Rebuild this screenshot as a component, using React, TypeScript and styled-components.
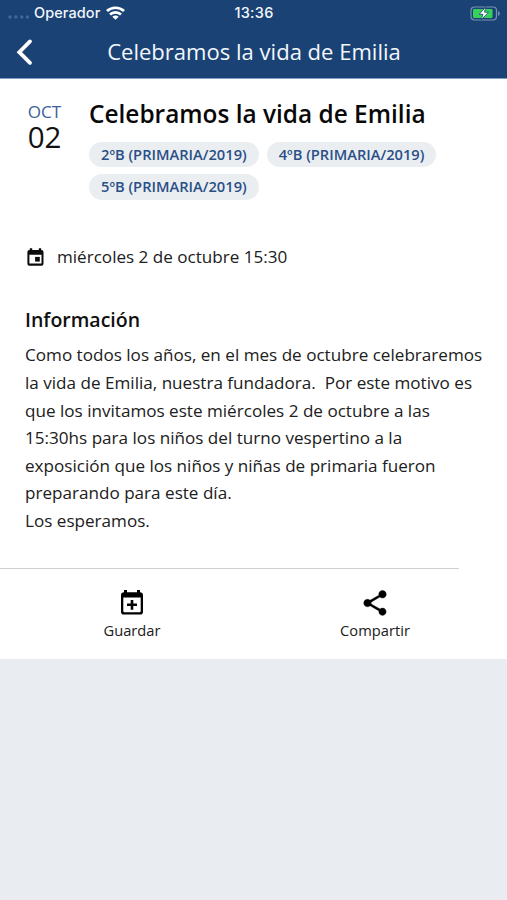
import React from "react";
import styled, { createGlobalStyle } from "styled-components";

const GlobalStyle = createGlobalStyle`
  *, *::before, *::after { box-sizing: border-box; }
  body { margin: 0; background: #e9edf1; font-family: "Open Sans", sans-serif; color: #202020; }
`;

const Screen = styled.main`
  width: 507px;
  min-height: 900px;
  background: #e9edf1;
`;

const Header = styled.header`
  height: 79px;
  background: #1a4274;
  border-bottom: 1px solid #7f9cc4;
  color: #f3f7fc;
`;

const StatusBar = styled.div`
  display: grid;
  grid-template-columns: 1fr auto 1fr;
  align-items: center;
  height: 26px;
  padding: 0 7px 0 8px;
  font: 500 14.5px/26px "Inter", sans-serif;
`;

const Carrier = styled.div`
  display: flex;
  align-items: center;
  letter-spacing: 0.08px;
`;

const SignalDots = styled.svg`
  margin: 8px 4px 0 0;
`;

const Wifi = styled.svg`
  margin-left: 6px;
`;

const Clock = styled.time`
  font-weight: 500;
  letter-spacing: 0.3px;
`;

const Battery = styled.svg`
  justify-self: end;
`;

const NavBar = styled.nav`
  display: grid;
  grid-template-columns: 50px 1fr 50px;
  align-items: center;
  height: 52px;
`;

const BackButton = styled.button`
  display: flex;
  padding: 0 0 0 15px;
  border: 0;
  background: none;
  color: #fff;
`;

const NavTitle = styled.h1`
  margin: 0 0 2px;
  padding-left: 1px;
  font-size: 22.05px;
  font-weight: 400;
  line-height: 30px;
  text-align: center;
`;

const Card = styled.article`
  height: 580px;
  padding-top: 20px;
  background: #fff;
`;

const Summary = styled.section`
  display: grid;
  grid-template-columns: 89px 1fr;
  height: 121px;
`;

const DateBadge = styled.div`
  display: flex;
  flex-direction: column;
  align-items: center;
  padding-top: 2px;
`;

const Month = styled.span`
  color: #3b609a;
  font-size: 17.1px;
  line-height: 22px;
`;

const Day = styled.span`
  color: #111;
  font-size: 29.5px;
  line-height: 27px;
`;

const EventTitle = styled.h2`
  margin: 0;
  color: #080808;
  font-size: 24.42px;
  font-weight: 600;
  line-height: 30px;
`;

const Chips = styled.div`
  display: flex;
  flex-wrap: wrap;
  gap: 7px 8px;
  padding-top: 12.5px;
`;

const Chip = styled.span`
  height: 25.5px;
  padding: 0 12px;
  border-radius: 13px;
  background: #eaeef1;
  color: #2b4f87;
  font-size: 14.68px;
  font-weight: 600;
  line-height: 25px;
`;

const Schedule = styled.div`
  display: flex;
  align-items: center;
  gap: 13px;
  height: 34px;
  margin-top: 20px;
  padding-left: 27px;
  font-size: 17.08px;
  line-height: 24px;
`;

const Information = styled.section`
  height: 242px;
  padding: 33px 20px 0 25px;
`;

const SectionTitle = styled.h3`
  margin: 0 0 8.4px;
  color: #101010;
  font-size: 19.5px;
  font-weight: 600;
  line-height: 26px;
`;

const Description = styled.div`
  font-size: 17.1px;
  line-height: 27.6px;
`;

const BodyLine = styled.span`
  display: block;
  white-space: pre;
`;

const Divider = styled.hr`
  width: 459px;
  height: 1px;
  margin: 52px 0 0;
  border: 0;
  background: #cfcfcf;
`;

const Actions = styled.footer`
  display: grid;
  grid-template-columns: 243px 243px;
  padding: 20px 0 0 10.5px;
`;

const ActionButton = styled.button`
  display: flex;
  flex-direction: column;
  align-items: center;
  padding: 0;
  border: 0;
  background: none;
  color: #202020;
  font: 400 14.7px/22px "Open Sans", sans-serif;
`;

const IconSlot = styled.span`
  display: flex;
  align-items: center;
  height: 27px;
  margin-bottom: 3px;
  color: #000;
`;

const groups = ["2ºB (PRIMARIA/2019)", "4ºB (PRIMARIA/2019)", "5ºB (PRIMARIA/2019)"];

const bodyLines = [
  "Como todos los años, en el mes de octubre celebraremos",
  "la vida de Emilia, nuestra fundadora.  Por este motivo es",
  "que los invitamos este miércoles 2 de octubre a las",
  "15:30hs para los niños del turno vespertino a la",
  "exposición que los niños y niñas de primaria fueron",
  "preparando para este día.",
  "Los esperamos.",
];

export default function App() {
  return (
    <>
      <GlobalStyle />
      <Screen>
        <Header>
          <StatusBar>
            <Carrier>
              <SignalDots width="22" height="4" viewBox="0 0 22 4" fill="#45669a">
                <circle cx="2" cy="2" r="1.7" />
                <circle cx="7.9" cy="2" r="1.7" />
                <circle cx="13.8" cy="2" r="1.7" />
                <circle cx="19.3" cy="2" r="1.7" />
              </SignalDots>
              Operador
              <Wifi width="19" height="14" viewBox="0 0 19 14" fill="none" stroke="#fff" strokeWidth="2.7">
                <path d="M1 5.1C5.7.6 13.3.6 18 5.1" />
                <path d="M4 8.5c3-2.9 8-2.9 11 0" />
                <path d="M9.5 13.8 6.3 10.7c1.7-1.6 4.7-1.6 6.4 0z" fill="#fff" stroke="none" />
              </Wifi>
            </Carrier>
            <Clock>13:36</Clock>
            <Battery width="30" height="15" viewBox="0 0 30 15">
              <rect x="1" y="1" width="25.5" height="13" rx="3.4" fill="none" stroke="#7891b0" strokeWidth="1.2" />
              <path d="M28 5v5c2.4-.8 2.4-4.2 0-5z" fill="#7891b0" />
              <rect x="3" y="3" width="19.5" height="9" rx="1.3" fill="#35d158" />
              <path d="M15.8.8 9.2 8.3h3.7L11.2 14l7.3-7.8h-4z" fill="#fff" stroke="#1a4274" strokeWidth=".8" />
            </Battery>
          </StatusBar>
          <NavBar>
            <BackButton aria-label="Volver">
              <svg width="18" height="28" viewBox="0 0 18 28" fill="none" stroke="currentColor" strokeWidth="3.8" strokeLinecap="round" strokeLinejoin="miter">
                <path d="M15 3.4 4.3 14.2 15 24.8" />
              </svg>
            </BackButton>
            <NavTitle>Celebramos la vida de Emilia</NavTitle>
          </NavBar>
        </Header>

        <Card>
          <Summary>
            <DateBadge>
              <Month>OCT</Month>
              <Day>02</Day>
            </DateBadge>
            <div>
              <EventTitle>Celebramos la vida de Emilia</EventTitle>
              <Chips>
                {groups.map((group) => (
                  <Chip key={group}>{group}</Chip>
                ))}
              </Chips>
            </div>
          </Summary>

          <Schedule>
            <svg width="17" height="18" viewBox="0 0 17 18">
              <path fillRule="evenodd" fill="#0c0c0c" d="M2.8.3h2.4V2h6.6V.3h2.4V2h.3a2 2 0 0 1 2 2v11.7a2 2 0 0 1-2 2H2.4a2 2 0 0 1-2-2V4a2 2 0 0 1 2-2h.4zM2.4 6.7v8.9h12.1V6.7z" />
              <path fill="#0c0c0c" d="M8.1 8.9h4.7v4.7H8.1z" />
            </svg>
            miércoles 2 de octubre 15:30
          </Schedule>

          <Information>
            <SectionTitle>Información</SectionTitle>
            <Description>
              {bodyLines.map((line) => (
                <BodyLine key={line}>{line}</BodyLine>
              ))}
            </Description>
          </Information>

          <Divider />

          <Actions>
            <ActionButton>
              <IconSlot>
                <svg width="22" height="25" viewBox="0 0 22 25" fill="currentColor">
                  <path fillRule="evenodd" d="M3 0h3v2.2h10V0h3v2.2A3 3 0 0 1 22 5v16.8a2.8 2.8 0 0 1-2.8 2.8H2.8A2.8 2.8 0 0 1 0 21.8V5a3 3 0 0 1 3-2.8zM2.3 7.5v13.7a1 1 0 0 0 1 1h15.4a1 1 0 0 0 1-1V7.5z" />
                  <path d="M9.7 10h2.6v3.5H16v2.6h-3.7v3.6H9.7v-3.6H6v-2.6h3.7z" />
                </svg>
              </IconSlot>
              Guardar
            </ActionButton>
            <ActionButton>
              <IconSlot>
                <svg width="30" height="30" viewBox="0 0 24 24" fill="currentColor" stroke="currentColor" strokeWidth=".3">
                  <path d="M18 16.08c-.76 0-1.44.3-1.96.77L8.91 12.7c.05-.23.09-.46.09-.7s-.04-.47-.09-.7l7.05-4.11c.54.5 1.25.81 2.04.81 1.66 0 3-1.34 3-3s-1.34-3-3-3-3 1.34-3 3c0 .24.04.47.09.7L8.04 9.81C7.5 9.31 6.79 9 6 9c-1.66 0-3 1.34-3 3s1.34 3 3 3c.79 0 1.5-.31 2.04-.81l7.12 4.16c-.05.21-.08.43-.08.65 0 1.61 1.31 2.92 2.92 2.92 1.61 0 2.92-1.31 2.92-2.92s-1.31-2.92-2.92-2.92z" />
                </svg>
              </IconSlot>
              Compartir
            </ActionButton>
          </Actions>
        </Card>
      </Screen>
    </>
  );
}
